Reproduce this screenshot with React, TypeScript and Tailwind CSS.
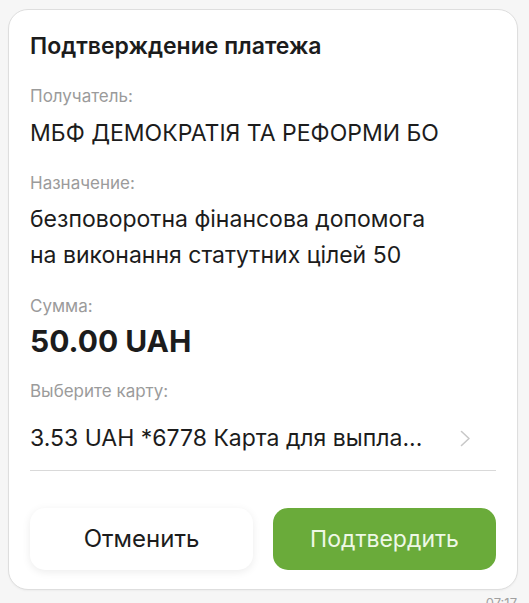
import React from 'react';

const Label = ({ children, className = '' }: { children: React.ReactNode; className?: string }) => (
  <div className={`text-[17px] leading-5 text-[#9b9b9b] ${className}`}>{children}</div>
);

const App = () => {
  return (
    <div
      className="h-[603px] w-[529px] overflow-hidden bg-[#f6f6f6] pt-[9px] pl-[8px] pr-[11px]"
      style={{ fontFamily: 'Inter, "Noto Sans", sans-serif' }}
    >
      {/* Payment confirmation card */}
      <div className="rounded-[20px] border border-[#dedede] bg-white px-[21px] pt-[22px] pb-[19px] shadow-[0_1px_2px_rgba(0,0,0,0.04)]">
        <h2 className="text-[23px] font-semibold leading-7 text-[#1c1c1c]">Подтверждение платежа</h2>

        <Label className="mt-[26px]">Получатель:</Label>
        <div className="mt-[13px] text-[23px] leading-7 text-[#1c1c1c]">МБФ ДЕМОКРАТІЯ ТА РЕФОРМИ БО</div>

        <Label className="mt-[26px]">Назначение:</Label>
        <div className="mt-[8px] text-[23px] leading-[36px] text-[#1c1c1c]">
          безповоротна фінансова допомога
          <br />
          на виконання статутних цілей 50
        </div>

        <Label className="mt-[23px]">Сумма:</Label>
        <div className="mt-[7px] text-[30px] font-bold leading-9 text-[#1c1c1c]">50.00 UAH</div>

        <Label className="mt-[22px]">Выберите карту:</Label>
        <div className="mt-[23px] flex items-center justify-between border-b border-[#d9d9d9] pb-[18px]">
          <span className="text-[23px] leading-7 text-[#1c1c1c]">3.53 UAH *6778 Карта для выпла...</span>
          <svg width="13" height="17" viewBox="0 0 13 17" fill="none" className="mr-[24px]">
            <path d="M2.5 1.5 L10 8.5 L2.5 15.5" stroke="#c8c8c8" strokeWidth="1.6" strokeLinecap="round" strokeLinejoin="round" />
          </svg>
        </div>

        <div className="mt-[37px] grid grid-cols-2 gap-5">
          <button className="h-[62px] rounded-[15px] bg-white text-[24px] text-[#1c1c1c] shadow-[0_2px_8px_rgba(0,0,0,0.08)]">
            Отменить
          </button>
          <button className="h-[62px] rounded-[15px] bg-[#6aab3a] text-[23px] text-[#eef8e6]">Подтвердить</button>
        </div>
      </div>

      <div className="mt-[5px] pr-[1px] text-right text-[13px] leading-4 text-[#a0a0a0]">07:17</div>
    </div>
  );
};

export default App;
